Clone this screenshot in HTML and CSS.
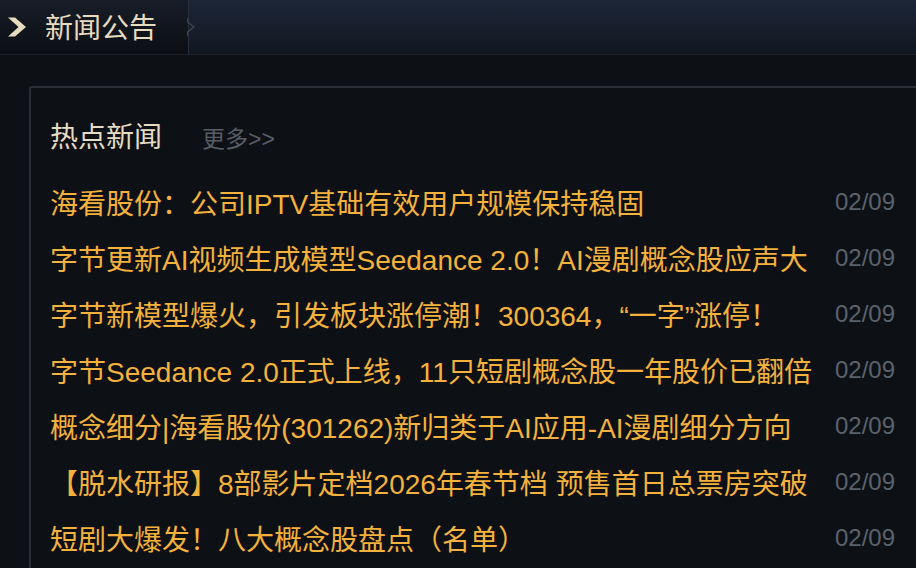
FILE: index.html
```html
<!DOCTYPE html>
<html lang="zh-CN">
<head>
<meta charset="utf-8">
<title>新闻公告</title>
<link rel="stylesheet" href="styles.css">
</head>
<body>
  <header class="topbar">
    <div class="tab">
      <svg class="chev" width="22" height="22" viewBox="0 0 22 22"><path d="M2 1.5 L9 1.5 L20 11 L9 20.5 L2 20.5 L12.5 11 Z" fill="#e8dcc0"/></svg>
      <span class="tab-title">新闻公告</span>
      <svg class="notch" width="10" height="18" viewBox="0 0 10 18"><path d="M0.5 0 L0.5 4 L7 9 L0.5 14 L0.5 18" fill="none" stroke="#3a4350" stroke-width="1.5"/></svg>
    </div>
    <div class="bar-rest"></div>
  </header>

  <section class="panel">
    <div class="panel-head">
      <h2 class="panel-title">热点新闻</h2>
      <a class="more">更多&gt;&gt;</a>
    </div>
    <ul class="news">
      <li class="row"><span class="title">海看股份：公司IPTV基础有效用户规模保持稳固</span><span class="date">02/09</span></li>
      <li class="row"><span class="title">字节更新AI视频生成模型Seedance 2.0！AI漫剧概念股应声大</span><span class="date">02/09</span></li>
      <li class="row"><span class="title">字节新模型爆火，引发板块涨停潮！300364，“一字”涨停！</span><span class="date">02/09</span></li>
      <li class="row"><span class="title">字节Seedance 2.0正式上线，11只短剧概念股一年股价已翻倍</span><span class="date">02/09</span></li>
      <li class="row"><span class="title">概念细分|海看股份(301262)新归类于AI应用-AI漫剧细分方向</span><span class="date">02/09</span></li>
      <li class="row"><span class="title">【脱水研报】8部影片定档2026年春节档 预售首日总票房突破</span><span class="date">02/09</span></li>
      <li class="row"><span class="title">短剧大爆发！八大概念股盘点（名单）</span><span class="date">02/09</span></li>
    </ul>
  </section>
</body>
</html>
```

FILE: styles.css
```css
* { box-sizing: border-box; }
html, body {
  margin: 0;
  padding: 0;
  background: #0d1015;
  overflow: hidden;
  width: 916px;
  height: 568px;
  font-family: "Liberation Sans", "Noto Sans CJK SC", sans-serif;
}
.topbar {
  display: flex;
  height: 55px;
  border-bottom: 1px solid #1d2228;
}
.tab {
  position: relative;
  width: 189px;
  display: flex;
  align-items: center;
  padding-left: 6px;
  background: linear-gradient(#171d28, #0b0e13);
  border-right: 1px solid #2a313c;
}
.chev { flex: none; }
.tab-title {
  margin-left: 17px;
  font-size: 28px;
  color: #e8dcc0;
  line-height: 1;
  position: relative;
  top: 2px;
}
.notch {
  position: absolute;
  right: -9px;
  top: 18px;
}
.bar-rest {
  flex: 1;
  background: linear-gradient(#1c2637, #111720);
}
.panel {
  margin: 31px -10px 0 29px;
  border-top: 2px solid #2a2e34;
  border-left: 2px solid #2a2e34;
  border-top-left-radius: 3px;
  padding: 19px 31px 0 19px;
  height: 482px;
  overflow: hidden;
}
.panel-head {
  display: flex;
  align-items: center;
  height: 56px;
}
.panel-title {
  margin: 0;
  font-weight: normal;
  font-size: 28px;
  color: #e6dcc4;
}
.more {
  margin-left: 40px;
  font-size: 23px;
  color: #585d65;
  position: relative;
  top: 2px;
}
.news {
  list-style: none;
  margin: 11px 0 0;
  padding: 0;
}
.row {
  display: flex;
  align-items: center;
  height: 56px;
}
.title {
  flex: 1;
  white-space: nowrap;
  font-size: 28px;
  color: #f4b23c;
}
.date {
  flex: none;
  margin-left: 20px;
  font-family: "Liberation Sans", sans-serif;
  font-size: 24px;
  color: #5a626d;
}
```
